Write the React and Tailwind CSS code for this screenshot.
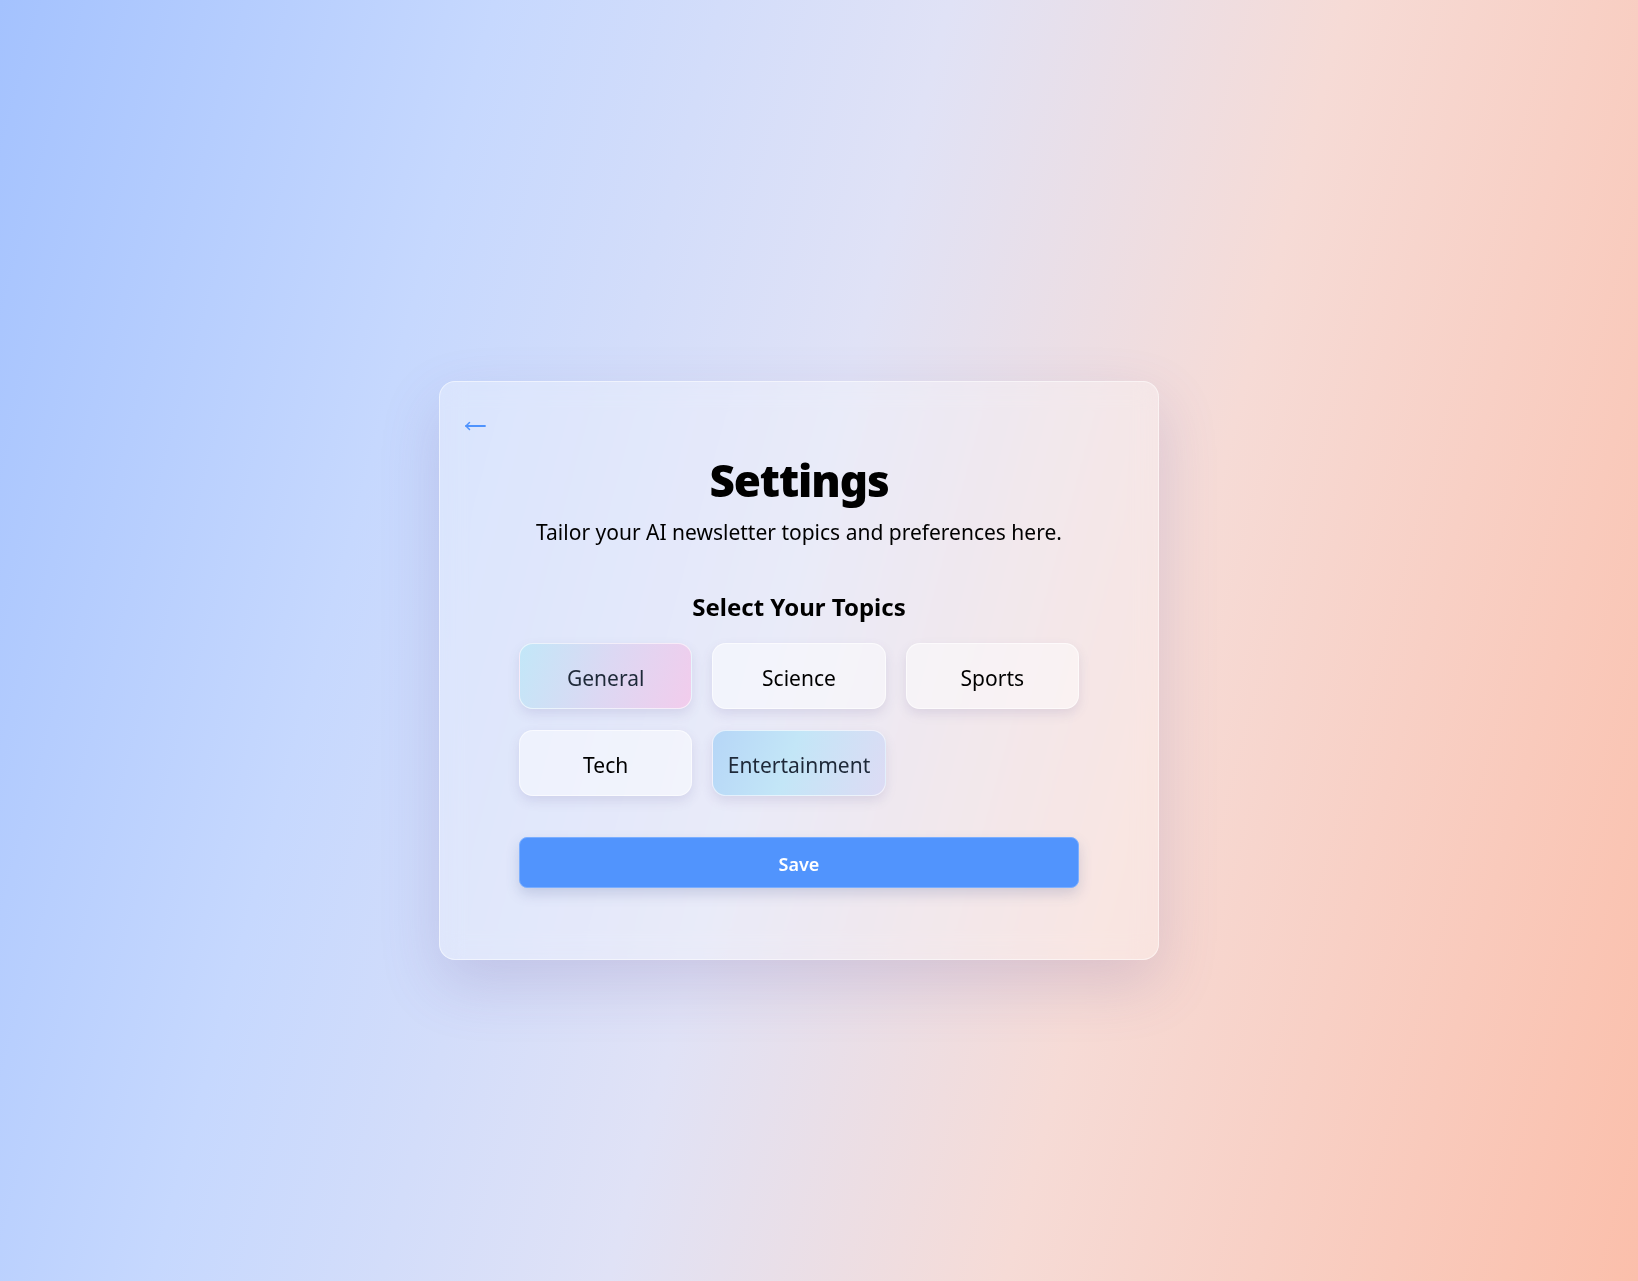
import React, { useState } from 'react';

const topics = ['General', 'Science', 'Sports', 'Tech', 'Entertainment'];

const selectedStyles = {
    General: 'bg-[linear-gradient(110deg,#c2e7f8_0%,#dcd8f3_50%,#f2ccec_100%)] text-gray-800',
    Entertainment: 'bg-[linear-gradient(110deg,#b6d6f7_0%,#c3e6f7_45%,#dddbf4_100%)] text-gray-800',
};

const BackArrow = () => (
    <svg width="22" height="12" viewBox="0 0 22 12" fill="none" className="text-[#4f93fd]">
        <path d="M2 6h19" stroke="currentColor" strokeWidth="1.8" strokeLinecap="round" />
        <path d="M5.5 2.5L2 6l3.5 3.5" stroke="currentColor" strokeWidth="1.5" strokeLinecap="round" strokeLinejoin="round" />
    </svg>
);

const App = () => {
    const [selected] = useState(['General', 'Entertainment']);

    return (
        <div
            className="min-h-screen w-full flex items-center justify-center pt-[60px] pr-[40px] bg-[linear-gradient(105deg,#a4c2fe_0%,#c6d8fe_25%,#e0e2f6_48%,#f6dbd6_68%,#fbbfab_100%)]"
            style={{ fontFamily: "'Noto Sans', 'Open Sans', sans-serif" }}
        >
            <div className="w-[720px] rounded-2xl border border-white/50 bg-white/30 backdrop-blur-md shadow-[0_24px_60px_rgba(110,90,160,0.2)] px-6 pt-6 pb-[71px]">
                <div className="h-10 flex items-center">
                    <button className="flex items-center">
                        <BackArrow />
                    </button>
                </div>

                <h1 className="mt-2 text-center text-[44px] leading-[52px] font-black text-black tracking-tight">
                    Settings
                </h1>
                <p className="mt-[12px] text-center text-[21px] leading-7 text-black">
                    Tailor your AI newsletter topics and preferences here.
                </p>

                <div className="mx-auto w-[560px]">
                    <h2 className="mt-[45px] text-center text-[24px] leading-8 font-bold text-black">
                        Select Your Topics
                    </h2>

                    <div className="mt-[20px] grid grid-cols-3 gap-x-5 gap-y-[21px]">
                        {topics.map((topic) => (
                            <button
                                key={topic}
                                className={`h-[66px] pt-[5px] rounded-[14px] border border-white/60 shadow-[0_5px_12px_rgba(90,80,140,0.14)] text-[21px] ${
                                    selected.includes(topic)
                                        ? selectedStyles[topic]
                                        : 'bg-white/45 text-black'
                                }`}
                            >
                                {topic}
                            </button>
                        ))}
                    </div>

                    <button className="mt-[41px] w-full h-[51px] pt-[3px] rounded-lg bg-[#5194fd] border border-[#7aaeff] text-white text-[18px] font-semibold shadow-[0_6px_14px_rgba(60,80,140,0.2)]">
                        Save
                    </button>
                </div>
            </div>
        </div>
    );
};

export default App;
